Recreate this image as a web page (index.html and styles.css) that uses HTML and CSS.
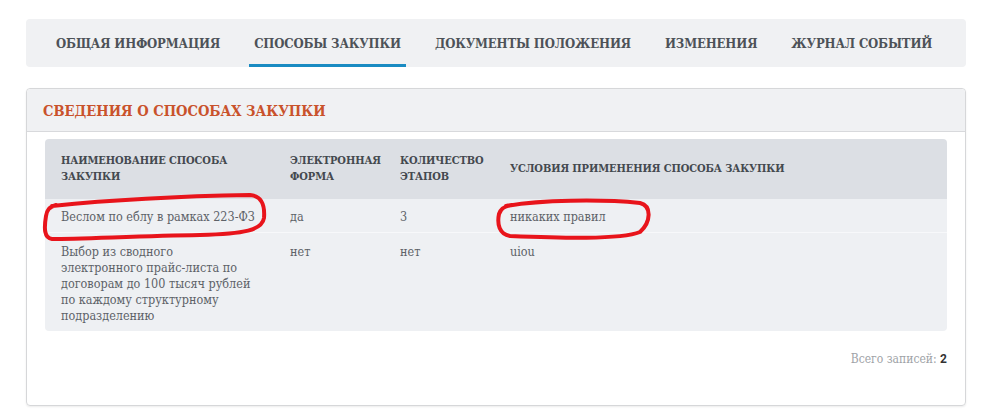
FILE: index.html
```html
<!DOCTYPE html>
<html lang="ru">
<head>
    <meta charset="UTF-8">
    <title>Способы закупки</title>
    <link rel="stylesheet" href="styles.css">
</head>
<body>
    <div class="page">
        <!-- Tabs -->
        <nav class="tabs">
            <a class="tab">Общая информация</a>
            <a class="tab active">Способы закупки</a>
            <a class="tab">Документы положения</a>
            <a class="tab">Изменения</a>
            <a class="tab">Журнал событий</a>
        </nav>

        <!-- Panel -->
        <div class="panel">
            <div class="panel-head">Сведения о способах закупки</div>
            <div class="panel-body">
                <table class="grid">
                    <thead>
                        <tr>
                            <th class="c1">Наименование способа<br>закупки</th>
                            <th class="c2">Электронная<br>форма</th>
                            <th class="c3">Количество<br>этапов</th>
                            <th>Условия применения способа закупки</th>
                        </tr>
                    </thead>
                    <tbody>
                        <tr class="first">
                            <td>Веслом по еблу в рамках 223-ФЗ</td>
                            <td>да</td>
                            <td>3</td>
                            <td>никаких правил</td>
                        </tr>
                        <tr>
                            <td>Выбор из сводного<br>электронного прайс-листа по<br>договорам до 100 тысяч рублей<br>по каждому структурному<br>подразделению</td>
                            <td>нет</td>
                            <td>нет</td>
                            <td>uiou</td>
                        </tr>
                    </tbody>
                </table>
                <div class="total">Всего записей: <b>2</b></div>
            </div>
        </div>

        <!-- red marker annotations -->
        <svg class="marks" width="1008" height="419" viewBox="0 0 1008 419">
            <path d="M52 206 C110 200 190 196 250 195 C262 196 265 205 264 218 C262 230 245 234 200 235 C140 236 80 239 52 239 C44 238 44 228 46 216 C47 210 49 207 56 205" />
            <path d="M506 206 C540 200 600 199 640 203 C652 206 651 222 640 232 C620 240 560 238 510 236 C499 234 497 224 499 214 C501 208 505 206 512 205" />
        </svg>
    </div>
</body>
</html>
```

FILE: styles.css
```css
/* Basic Reset */
* {
    box-sizing: border-box;
    margin: 0;
    padding: 0;
}

body {
    font-family: "Roboto Slab", "DejaVu Serif Condensed", "DejaVu Serif", serif;
    background-color: #fff;
    color: #555b61;
}

.page {
    position: relative;
    width: 1008px;
    height: 419px;
    padding: 19px 42px 0 26px;
}

/* Tabs */
.tabs {
    display: flex;
    gap: 24px;
    height: 48px;
    padding: 0 25px;
    background: #f0f1f3;
    border-radius: 4px;
}

.tab {
    display: flex;
    align-items: center;
    padding: 4px 5px 0;
    font-size: 13px;
    font-weight: bold;
    letter-spacing: -0.15px;
    text-transform: uppercase;
    color: #4d5258;
    border-bottom: 3px solid transparent;
    white-space: nowrap;
}

.tab.active {
    border-bottom-color: #1a8bc2;
}

/* Panel */
.panel {
    margin-top: 21px;
    height: 318px;
    border: 1px solid #d6d7d9;
    border-radius: 4px;
    box-shadow: 0 1px 2px rgba(0, 0, 0, 0.08);
}

.panel-head {
    height: 43px;
    padding: 0 16px;
    display: flex;
    align-items: center;
    background: #f0f1f3;
    border-bottom: 1px solid #d8d9dc;
    border-radius: 4px 4px 0 0;
    font-size: 14.6px;
    font-weight: bold;
    text-transform: uppercase;
    color: #c9522b;
}

.panel-body {
    padding: 7px 18px 0 18px;
}

/* Table */
.grid {
    width: 100%;
    table-layout: fixed;
    border-collapse: separate;
    border-spacing: 0;
    font-size: 12.5px;
    line-height: 16px;
}

.grid th {
    background: #dcdfe4;
    text-align: left;
    vertical-align: middle;
    font-size: 11px;
    font-weight: bold;
    letter-spacing: -0.1px;
    text-transform: uppercase;
    color: #44494f;
    padding: 14px 6px 14px 16px;
    height: 60px;
    white-space: nowrap;
}

.grid th:first-child { border-top-left-radius: 4px; }
.grid th:last-child { border-top-right-radius: 4px; }

.grid .c1 { width: 229px; }
.grid .c2 { width: 110px; }
.grid .c3 { width: 110px; }

.grid td {
    background: #eef0f3;
    vertical-align: top;
    padding: 11px 6px 7px 16px;
    color: #5d6268;
}

.grid tr.first td {
    padding-top: 10px;
    padding-bottom: 7px;
    border-bottom: 1px solid #f7f8fa;
}

.grid tbody tr:last-child td:first-child { border-bottom-left-radius: 4px; }
.grid tbody tr:last-child td:last-child { border-bottom-right-radius: 4px; }

.total {
    margin-top: 21px;
    text-align: right;
    font-size: 12px;
    color: #a0a3a7;
}

.total b {
    font-family: "Roboto", "Liberation Sans", sans-serif;
    color: #333;
}

/* Marker annotations over the table */
.marks {
    position: absolute;
    left: 0;
    top: 0;
    pointer-events: none;
}

.marks path {
    fill: none;
    stroke: #e8141b;
    stroke-width: 4;
    stroke-linecap: round;
    stroke-linejoin: round;
}
```
